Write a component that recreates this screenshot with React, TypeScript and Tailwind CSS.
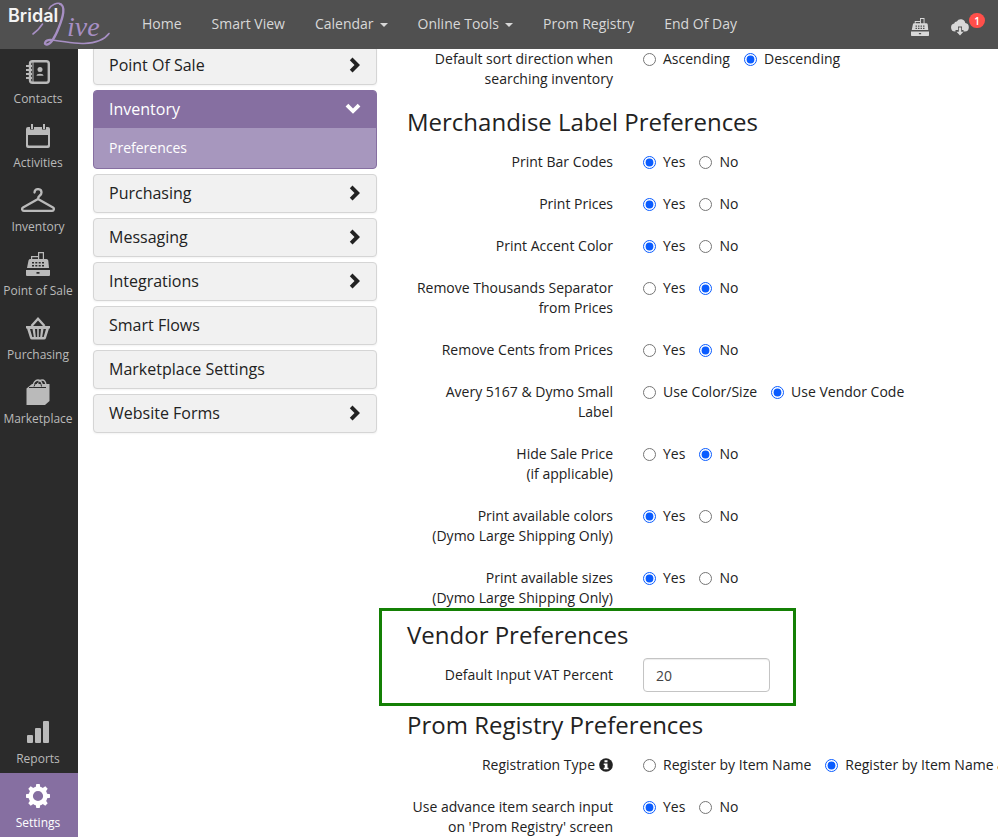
import type { ReactNode } from 'react';

type Choice = { text: string; on?: boolean };

const yesNo = (yes: boolean): Choice[] => [
  { text: 'Yes', on: yes },
  { text: 'No', on: !yes },
];

function Register({ className }: { className: string }) {
  return (
    <svg viewBox="0 0 24 24" className={className} fill="currentColor" aria-hidden="true">
      <path
        fillRule="evenodd"
        d="M12 0h6v7h2.500q1.500 0 1.800 1.500L23 16H1L2.500 8.500Q2.800 7 4 7h1V4h7V3zM13.200 1.200v5.800h3.600V1.200zM6.200 5.200V7H12V5.200zM6 10v1.500h2V10zm3.300 0v1.500h2V10zm3.400 0v1.500h2V10zm3.300 0v1.500h2V10zM6 13v1.500h2V13zm3.300 0v1.500h2V13zm3.400 0v1.500h2V13zm3.300 0v1.500h2V13z"
      />
      <path fillRule="evenodd" d="M0 18h24v5q0 1-1 1H1q-1 0-1-1zm10.500 2v1.800h3V20z" />
    </svg>
  );
}

const icons: Record<string, ReactNode> = {
  Contacts: (
    <svg viewBox="0 0 24 24" className="size-6" fill="none" stroke="currentColor" strokeWidth="2.4" aria-hidden="true">
      <rect x="4" y="1.200" width="18.800" height="21.600" rx="2.500" />
      <path d="M0 6h6M0 10h6M0 14h6M0 18h6" strokeWidth="2" />
      <path d="M7 2v20" strokeWidth="1" />
      <circle cx="14" cy="9.500" r="2.500" fill="currentColor" stroke="none" />
      <path d="M10.500 15.800q0-2 3.500-2t3.500 2z" fill="currentColor" stroke="none" />
    </svg>
  ),
  Activities: (
    <svg viewBox="0 0 24 24" className="size-6" fill="currentColor" aria-hidden="true">
      <path
        fillRule="evenodd"
        d="M2 3h2v2.500h4V3h8v2.500h4V3h2q2 0 2 2v17q0 2-2 2H2q-2 0-2-2V5q0-2 2-2zm0 8v9.500q0 1 1 1h18q1 0 1-1V11z"
      />
      <path d="M5 0h2v5H5zM17 0h2v5h-2z" />
    </svg>
  ),
  Inventory: (
    <svg viewBox="0 0 34 24" className="h-6 w-[34px]" fill="none" stroke="currentColor" strokeWidth="2.3" strokeLinecap="round" strokeLinejoin="round" aria-hidden="true">
      <path d="M13.500 4.500C13.500 0 20.500 0 20.500 4.500c0 3.500-3.500 2.500-3.500 6.500L2 19.500c-1.500 1-1 3.300.8 3.300h28.400c1.800 0 2.300-2.300.8-3.300L17 11" />
    </svg>
  ),
  'Point of Sale': <Register className="size-6" />,
  Purchasing: (
    <svg viewBox="0 0 24 24" className="size-6" aria-hidden="true">
      <path d="M5.500 10 12 2.800 18.500 10" fill="none" stroke="currentColor" strokeWidth="2.400" />
      <path
        fill="currentColor"
        fillRule="evenodd"
        d="M0 10h24v2.500h-1L20 22q-.4 1.500-2 1.500H6q-1.600 0-2-1.500L1 12.500H0zm4 3 2.300 8h1.500L6.500 13zm5 0 .8 8h1.400V13zm3.800 0v8h1.400l.8-8zm4.700 0-1.300 8h1.500l2.300-8z"
      />
    </svg>
  ),
  Marketplace: (
    <svg viewBox="0 0 24 26" className="h-[26px] w-6" fill="none" stroke="currentColor" aria-hidden="true">
      <path fill="currentColor" stroke="none" d="M6 5h17.500v17l-4.500 4H.5V9.500z" />
      <path stroke="#2b2b2b" strokeWidth="1" d="M3 8.500h17" />
      <path strokeWidth="1.400" d="M6.500 8Q8 1 12 1t4.500 7M11 6.500Q12.500 1 16 1t4 5" />
      <path stroke="#2b2b2b" strokeWidth="1" d="M8 7.500q1-4.500 4-4.500t3.500 4.500" />
    </svg>
  ),
  Reports: (
    <svg viewBox="0 0 24 24" className="size-6" fill="currentColor" aria-hidden="true">
      <rect x="1" y="15" width="6" height="8" rx="1" />
      <rect x="9" y="8" width="6" height="15" rx="1" />
      <rect x="17" y="1" width="6" height="22" rx="1" />
    </svg>
  ),
  Settings: (
    <svg viewBox="0 0 24 24" className="size-6" aria-hidden="true">
      <circle cx="12" cy="12" r="7.300" fill="none" stroke="currentColor" strokeWidth="4.400" />
      <g fill="currentColor">
        <path d="M9.500 4 10.300 0h3.400l.8 4zM9.500 20l.8 4h3.400l.8-4zM4 9.500 0 10.300v3.400l4 .8zM20 9.500l4 .8v3.400l-4 .8z" />
        <path d="M4.500 8 2.300 4.700l2.400-2.400L8 4.500zM16 4.500l3.300-2.200 2.400 2.400L19.500 8zM19.500 16l2.200 3.300-2.400 2.400L16 19.500zM8 19.500l-3.300 2.200-2.400-2.400L4.500 16z" />
      </g>
    </svg>
  ),
};

function Chevron({ open }: { open?: boolean }) {
  return open ? (
    <svg viewBox="0 0 16 16" className="size-4" fill="currentColor" aria-hidden="true">
      <path d="M3.300 2.800 8 7.400l4.700-4.600 2.700 2.700L8 12.800.6 5.500z" />
    </svg>
  ) : (
    <svg viewBox="0 0 16 16" className="size-4" fill="currentColor" aria-hidden="true">
      <path d="M4.800 3.300 7.500.6 15 8l-7.500 7.400-2.700-2.700L9.500 8z" />
    </svg>
  );
}

function Logo() {
  return (
    <a href="#home" aria-label="BridalLive" className="block w-[127px] shrink-0">
      <svg viewBox="0 0 127 49" className="h-[49px] w-[127px]">
        <g fill="none" stroke="#a78fc4" strokeLinecap="round">
          <path strokeWidth="1.500" d="M49 9C51 5 57 2 61 4" />
          <path strokeWidth="2.300" d="M60 4C66 6 63 17 59 27C56 35 51 44 47 44.500C43 45 45 39.500 51 40" />
          <path strokeWidth="1.600" d="M51 40C64 41 72 44 84 43.500C96 43 105 39 109 33.500" />
          <path strokeWidth="1.600" d="M33 34C37 31 40 28 42.500 24" />
        </g>
        <text x="67" y="36" fill="#a78fc4" fontSize="28" fontStyle="italic" fontFamily="Liberation Serif, serif">
          ive
        </text>
        <text x="8" y="22" fill="#f4f4f4" fontSize="18" fontWeight="600" fontFamily="Inter, sans-serif">
          Bridal
        </text>
      </svg>
    </a>
  );
}

const navItems = [
  { text: 'Home' },
  { text: 'Smart View' },
  { text: 'Calendar', menu: true },
  { text: 'Online Tools', menu: true },
  { text: 'Prom Registry' },
  { text: 'End Of Day' },
];

function Header() {
  return (
    <header className="flex h-[49px] shrink-0 items-center bg-[#505050] text-[#d8d8d8]">
      <Logo />
      <nav className="flex flex-1 items-center pb-[2px]">
        {navItems.map((n) => (
          <a key={n.text} href="#nav" className="flex items-center gap-[6px] px-[15px] leading-5 whitespace-nowrap">
            {n.text}
            {n.menu && <span className="mt-[2px] border-x-4 border-t-4 border-x-transparent border-t-current" />}
          </a>
        ))}
      </nav>
      <div className="flex items-center gap-[22px] pt-[5px] pr-[29px]">
        <button type="button" aria-label="Register">
          <Register className="block size-[18px]" />
        </button>
        <button type="button" aria-label="Downloads, 1 new" className="relative">
          <svg viewBox="0 0 18 18" className="block size-[18px]" fill="currentColor" aria-hidden="true">
            <path d="M4.500 13.500H4a4 4 0 0 1-.8-7.900A2.600 2.600 0 0 1 5.800 3.500 4.600 4.600 0 0 1 14.300 5a4.300 4.300 0 0 1-.3 8.500h-1.500V12H11V8.500H7V12H4.500z" />
            <path d="M7.800 9.500h2.400v4.300h2.300L9 17.500l-3.500-3.700h2.300z" />
          </svg>
          <span className="absolute -top-[5px] left-[18px] flex h-[15px] w-4 items-center justify-center rounded-full bg-[#ff4f4a] text-[10px] font-semibold text-white">
            1
          </span>
        </button>
      </div>
    </header>
  );
}

function RailItem({ name, active }: { name: string; active?: boolean }) {
  return (
    <a
      href="#rail"
      className={
        active
          ? 'flex h-16 flex-col items-center justify-between bg-[#866fa1] pt-[11px] pr-[2px] pb-1 text-xs leading-5 whitespace-nowrap text-white'
          : 'flex h-16 flex-col items-center justify-between pt-[11px] pr-[2px] pb-1 text-xs leading-5 whitespace-nowrap text-[#bababa]'
      }
    >
      <span className="flex h-6 items-center">{icons[name]}</span>
      {name}
    </a>
  );
}

function Panel({ text, arrow = true }: { text: string; arrow?: boolean }) {
  return (
    <button
      type="button"
      className="flex h-[39px] w-full items-center justify-between rounded-[4px] border border-[#d5d5d5] bg-[#f1f1f1] px-[15px] pb-[2px] text-base shadow-xs"
    >
      {text}
      {arrow && <Chevron />}
    </button>
  );
}

function Row({ label, name, choices }: { label: ReactNode; name: string; choices: Choice[] }) {
  return (
    <div role="radiogroup" aria-labelledby={name} className="flex gap-[30px]">
      <div id={name} className="w-[206px] shrink-0 pl-1 text-right">
        {label}
      </div>
      <div className="flex h-5 gap-[14px] whitespace-nowrap">
        {choices.map((c) => (
          <label key={c.text} className="flex items-center gap-[7px]">
            <input type="radio" name={name} defaultChecked={c.on} className="size-[13px] accent-[#0a5cff]" />
            {c.text}
          </label>
        ))}
      </div>
    </div>
  );
}

function Title({ children }: { children: ReactNode }) {
  return <h2 className="text-2xl leading-[26px]">{children}</h2>;
}

export default function App() {
  return (
    <div className="flex h-screen flex-col overflow-hidden bg-white font-['Open_Sans','Noto_Sans',sans-serif] text-sm leading-5 text-[#222]">
      <Header />
      <div className="flex min-h-0 flex-1">
        <aside className="flex w-[78px] shrink-0 flex-col justify-between bg-[#2b2b2b]">
          <nav>
            {['Contacts', 'Activities', 'Inventory', 'Point of Sale', 'Purchasing', 'Marketplace'].map((n) => (
              <RailItem key={n} name={n} />
            ))}
          </nav>
          <nav>
            <RailItem name="Reports" />
            <RailItem name="Settings" active />
          </nav>
        </aside>
        <div className="flex min-w-0 flex-1 overflow-hidden pl-[15px]">
          <nav className="-mt-[3px] flex w-[284px] shrink-0 flex-col gap-[5px]">
            <Panel text="Point Of Sale" />
            <div className="overflow-hidden rounded-[4px] border border-[#866fa1] bg-[#a797be] text-white">
              <button type="button" className="flex h-[37px] w-full items-center justify-between bg-[#866fa1] px-[15px] pb-[2px] text-base">
                Inventory
                <Chevron open />
              </button>
              <a href="#preferences" className="flex h-10 items-center px-[15px] font-medium">
                Preferences
              </a>
            </div>
            <Panel text="Purchasing" />
            <Panel text="Messaging" />
            <Panel text="Integrations" />
            <Panel text="Smart Flows" arrow={false} />
            <Panel text="Marketplace Settings" arrow={false} />
            <Panel text="Website Forms" />
          </nav>
          <main className="min-w-0 flex-1 overflow-hidden pl-[2px]">
            <div className="px-7">
              <Row
                name="sort"
                label="Default sort direction when searching inventory"
                choices={[{ text: 'Ascending' }, { text: 'Descending', on: true }]}
              />
            </div>
            <section className="mt-5 px-7">
              <Title>Merchandise Label Preferences</Title>
              <div className="mt-[17px] flex flex-col gap-[22px]">
                <Row name="barcodes" label="Print Bar Codes" choices={yesNo(true)} />
                <Row name="prices" label="Print Prices" choices={yesNo(true)} />
                <Row name="accent" label="Print Accent Color" choices={yesNo(true)} />
                <Row name="thousands" label="Remove Thousands Separator from Prices" choices={yesNo(false)} />
                <Row name="cents" label="Remove Cents from Prices" choices={yesNo(false)} />
                <Row
                  name="avery"
                  label="Avery 5167 & Dymo Small Label"
                  choices={[{ text: 'Use Color/Size' }, { text: 'Use Vendor Code', on: true }]}
                />
                <Row name="sale" label={<>Hide Sale Price<br />(if applicable)</>} choices={yesNo(false)} />
                <Row name="colors" label={<>Print available colors<br />(Dymo Large Shipping Only)</>} choices={yesNo(true)} />
                <Row name="sizes" label={<>Print available sizes<br />(Dymo Large Shipping Only)</>} choices={yesNo(true)} />
              </div>
            </section>
            <section className="w-[417px] border-3 border-[#148005] px-[25px] py-[11px]">
              <Title>Vendor Preferences</Title>
              <div className="mt-[10px] flex items-center gap-[30px]">
                <label htmlFor="vat" className="w-[206px] shrink-0 text-right">
                  Default Input VAT Percent
                </label>
                <input
                  id="vat"
                  type="text"
                  defaultValue="20"
                  className="h-[34px] w-[127px] rounded-[4px] border border-[#c4c4c4] bg-white px-3 text-[#444] shadow-[inset_0_1px_1px_rgba(0,0,0,0.075)]"
                />
              </div>
            </section>
            <section className="mt-[6px] px-7">
              <Title>Prom Registry Preferences</Title>
              <div className="mt-[17px] flex flex-col gap-[22px]">
                <Row
                  name="registration"
                  label={
                    <span className="flex items-center justify-end gap-1">
                      Registration Type
                      <svg viewBox="0 0 14 14" className="size-[14px]" aria-hidden="true">
                        <circle cx="7" cy="7" r="6.800" fill="#222" />
                        <path fill="#fff" d="M5.500 2.300h3v2h-3zM4.700 5.500h3.800v4.300h1v1.500H4.700V9.800h1V7h-1z" />
                      </svg>
                    </span>
                  }
                  choices={[{ text: 'Register by Item Name' }, { text: 'Register by Item Name and Color', on: true }]}
                />
                <Row
                  name="advance"
                  label="Use advance item search input on 'Prom Registry' screen"
                  choices={yesNo(true)}
                />
              </div>
            </section>
          </main>
        </div>
      </div>
    </div>
  );
}
